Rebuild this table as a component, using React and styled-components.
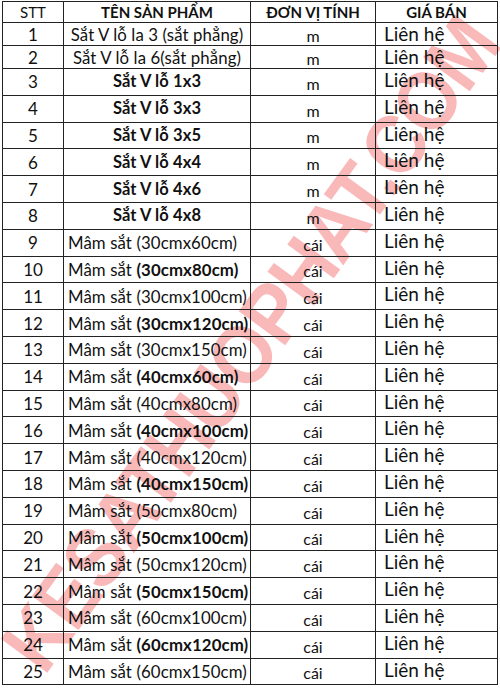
import React from "react";
import styled, { createGlobalStyle } from "styled-components";

const GlobalStyle = createGlobalStyle`
  html, body {
    margin: 0;
    padding: 0;
    background: #ffffff;
  }
  body {
    font-family: "Lato", "Open Sans", sans-serif;
    color: #111;
  }
`;

const products = [
  { name: "Sắt V lỗ la 3 (sắt phẳng)", unit: "m", short: true },
  { name: "Sắt V lỗ la 6(sắt phẳng)", unit: "m", short: true },
  { name: "Sắt V lỗ 1x3", unit: "m", bold: true },
  { name: "Sắt V lỗ 3x3", unit: "m", bold: true },
  { name: "Sắt V lỗ 3x5", unit: "m", bold: true },
  { name: "Sắt V lỗ 4x4", unit: "m", bold: true },
  { name: "Sắt V lỗ 4x6", unit: "m", bold: true },
  { name: "Sắt V lỗ 4x8", unit: "m", bold: true },
  { size: "30cmx60cm" },
  { size: "30cmx80cm", strong: true },
  { size: "30cmx100cm" },
  { size: "30cmx120cm", strong: true },
  { size: "30cmx150cm" },
  { size: "40cmx60cm", strong: true },
  { size: "40cmx80cm" },
  { size: "40cmx100cm", strong: true },
  { size: "40cmx120cm" },
  { size: "40cmx150cm", strong: true },
  { size: "50cmx80cm" },
  { size: "50cmx100cm", strong: true },
  { size: "50cmx120cm" },
  { size: "50cmx150cm", strong: true },
  { size: "60cmx100cm" },
  { size: "60cmx120cm", strong: true },
  { size: "60cmx150cm" },
];

const App = () => {
  return (
    <>
      <GlobalStyle />
      <Page>
        <Watermark>KESATHUOPHAT.COM</Watermark>
        <PriceTable>
          <colgroup>
            <col style={{ width: "61px" }} />
            <col style={{ width: "187px" }} />
            <col style={{ width: "125px" }} />
            <col style={{ width: "122px" }} />
          </colgroup>
          <thead>
            <HeadRow>
              <SttHead>STT</SttHead>
              <HeadCell>TÊN SẢN PHẨM</HeadCell>
              <HeadCell>ĐƠN VỊ TÍNH</HeadCell>
              <HeadCell>GIÁ BÁN</HeadCell>
            </HeadRow>
          </thead>
          <tbody>
            {products.map((p, i) => (
              <BodyRow key={i} $short={p.short}>
                <Cell $align="center">{i + 1}</Cell>
                {p.size ? (
                  <NameCell $align="left">
                    Mâm sắt{" "}
                    {p.strong ? <b>({p.size})</b> : <span>({p.size})</span>}
                  </NameCell>
                ) : (
                  <NameCell $align="center" $bold={p.bold}>
                    {p.name}
                  </NameCell>
                )}
                <UnitCell>{p.unit || "cái"}</UnitCell>
                <PriceCell>Liên hệ</PriceCell>
              </BodyRow>
            ))}
          </tbody>
        </PriceTable>
      </Page>
    </>
  );
};

const Page = styled.div`
  position: relative;
  width: 500px;
  height: 688px;
  overflow: hidden;
  padding: 1px 0 0 2px;
  box-sizing: border-box;
`;

const PriceTable = styled.table`
  position: relative;
  border-collapse: collapse;
  table-layout: fixed;
  width: 495px;
  border: 1.5px solid #222;
`;

const HeadRow = styled.tr`
  height: 21px;
`;

const HeadCell = styled.th`
  border: 1px solid #222;
  font-size: 15px;
  font-weight: 700;
  padding: 0;
  text-align: center;
  line-height: 19px;
`;

const SttHead = styled(HeadCell)`
  font-weight: 400;
`;

const BodyRow = styled.tr`
  height: ${(props) => (props.$short ? "21px" : "26.8px")};
`;

const Cell = styled.td`
  border: 1px solid #222;
  padding: 0;
  font-size: 17px;
  line-height: 19px;
  text-align: ${(props) => props.$align};
  white-space: nowrap;
  overflow: visible;
`;

const NameCell = styled(Cell)`
  font-weight: ${(props) => (props.$bold ? 700 : 400)};
  padding-left: ${(props) => (props.$align === "left" ? "4px" : "0")};
  font-size: ${(props) => (props.$bold ? "16.5px" : "16.8px")};
  letter-spacing: 0.1px;
  b {
    font-weight: 700;
  }
`;

const UnitCell = styled(Cell)`
  text-align: center;
  font-size: 16px;
  padding-top: 3px;
`;

const PriceCell = styled(Cell)`
  padding-left: 8px;
  font-size: 19px;
  vertical-align: top;
  padding-top: 1px;
`;

const Watermark = styled.div`
  position: absolute;
  left: 50%;
  top: 50%;
  transform: translate(-50%, -50%) rotate(-54deg) scaleY(1.1);
  font-family: "Liberation Sans", Arial, sans-serif;
  font-weight: 700;
  font-size: 76px;
  letter-spacing: -2px;
  color: rgba(242, 100, 100, 0.45);
  white-space: nowrap;
  pointer-events: none;
`;

export default App;
